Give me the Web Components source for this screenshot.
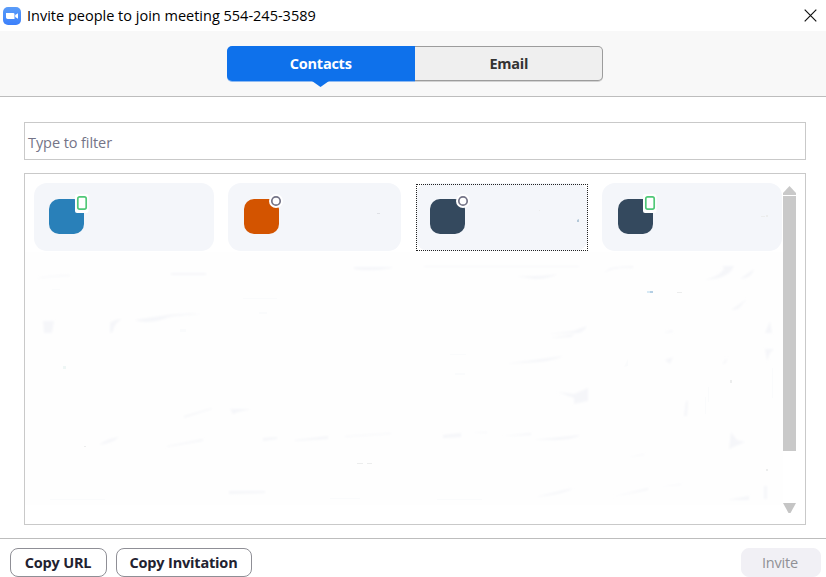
<!DOCTYPE html>
<html lang="en">
<head>
<meta charset="utf-8">
<title>Invite people</title>
<style>
html, body { margin: 0; height: 100%; overflow: hidden; background: #fff; }
body { font-family: "Open Sans", "Noto Sans", sans-serif; font-size: 14.5px; color: #000; }
</style>
</head>
<body>
<invite-window></invite-window>
<script>
const define = (name, html, setup) => {
  const template = document.createElement('template');
  template.innerHTML = html;
  customElements.define(name, class extends HTMLElement {
    constructor() {
      super();
      this.attachShadow({ mode: 'open' }).append(template.content.cloneNode(true));
    }
    connectedCallback() { if (setup) setup(this, this.shadowRoot); }
  });
};

define('title-bar', `
<style>
:host { display: flex; align-items: center; height: 31px; box-sizing: border-box; padding: 0 9px 0 3px; background: #fff; }
.logo { flex: none; margin-right: 6px; }
.text { flex: 1; white-space: nowrap; line-height: 30px; font-size: 14.5px; }
</style>
<svg class="logo" width="18" height="18" viewBox="0 0 18 18">
  <defs><linearGradient id="g" x1="0" y1="0" x2="0" y2="1"><stop offset="0" stop-color="#5a9cf8"/><stop offset="1" stop-color="#3c80fb"/></linearGradient></defs>
  <rect width="18" height="18" rx="5" fill="url(#g)"/>
  <path d="M3 6h7.2q1.3 0 1.3 1.3V12H4.600Q3 12 3 10.600zM12.200 8.100L15 6.200v5.600l-2.800-1.900z" fill="#fff"/>
</svg>
<span class="text"><slot></slot></span>
<svg width="13" height="13" viewBox="0 0 13 13"><path d="M.7.7l11.600 11.600M12.300.7L.7 12.300" stroke="#111" stroke-width="1.200"/></svg>
`);

define('tab-button', `
<style>
:host { display: block; box-sizing: border-box; width: 188.5px; height: 35px; padding-left: 1px; border: 1px solid #9c9c9c; border-left: 0; border-radius: 0 5px 5px 0;
  background: #efefef; box-shadow: 0 1px 0 #d2d2d2; color: #333; font-weight: 700; font-size: 14.5px; letter-spacing: -.25px; line-height: 34px; text-align: center; position: relative; }
:host([selected]) { width: 187.5px; padding-left: 0; border: 0; border-radius: 5px 0 0 5px; background: #0e71eb; box-shadow: 0 1px 0 #8ebaf2; color: #fff; line-height: 36px; }
:host([selected])::after { content: ""; position: absolute; left: 85px; top: 35px; width: 17px; height: 6px; background: #0e71eb; clip-path: polygon(0 0, 100% 0, 50% 100%); }
</style>
<slot></slot>
`);

define('tab-strip', `
<style>
:host { display: flex; justify-content: center; box-sizing: border-box; height: 66px; padding: 15px 0 0 4px; background: #f8f8f8; border-bottom: 1px solid #bdbdbd; }
</style>
<slot></slot>
`);

define('filter-field', `
<style>
:host { display: block; box-sizing: border-box; height: 38px; padding-left: 3px; border: 1px solid #c9c9c9; color: #747487; line-height: 39px; font-size: 14.5px; letter-spacing: -.08px; }
</style>
<slot></slot>
`);

define('contact-card', `
<style>
:host { display: block; box-sizing: border-box; height: 68px; padding: 16px 0 0 var(--inset, 16px); border-radius: 13px; background: #f4f6fa; position: relative; }
:host([focused])::after { content: ""; position: absolute; inset: 1px 0 0 0; border: 1px dotted #222; }
.avatar { position: relative; width: 35px; height: 35px; border-radius: 10px; background: var(--tone); }
svg { position: absolute; left: var(--badge, 24px); top: -6px; overflow: visible; }
.mobile, .offline { display: none; }
:host([status=mobile]) .mobile, :host([status=offline]) .offline { display: block; }
</style>
<div class="avatar">
  <svg class="mobile" width="18" height="22" viewBox="0 0 18 22"><rect x="2" y="1" width="13.500" height="19" rx="2" fill="#fff"/><rect x="4.800" y="3.900" width="8.400" height="12.200" rx="1.800" fill="#fff" stroke="#50c878" stroke-width="1.700"/></svg>
  <svg class="offline" width="18" height="22" viewBox="0 0 18 22"><circle cx="8" cy="8" r="7" fill="#fff"/><circle cx="8" cy="8" r="4.200" fill="#fff" stroke="#747487" stroke-width="1.700"/></svg>
</div>
`, (host) => {
  host.style.setProperty('--tone', host.getAttribute('tone'));
  host.style.setProperty('--inset', host.getAttribute('inset') + 'px');
  host.style.setProperty('--badge', (host.getAttribute('badge') || 24) + 'px');
});

define('scroll-rail', `
<style>
:host { display: flex; flex-direction: column; width: 13px; height: 328px; }
.thumb { height: 255px; margin-top: 1px; background: #c9c9c9; }
svg { display: block; }
.down { margin-top: auto; }
</style>
<svg width="13" height="9"><path d="M6.500 0L13 7v2H0V7z" fill="#c9c9c9"/></svg>
<div class="thumb"></div>
<svg class="down" width="13" height="11"><path d="M0 0h13L7.500 10h-2z" fill="#c5c5c5"/></svg>
`);

define('faded-rows', `
<style>:host { display: block; } svg { display: block; }</style>
<svg width="758" height="320" viewBox="25 185 758 320">
  <defs><filter id="s" x="-5%" y="-5%" width="110%" height="110%"><feGaussianBlur stdDeviation="1"/></filter></defs>
  <rect x="25" y="252" width="758" height="253" fill="#fefefe"/>
  <g fill="#f5f6f9" filter="url(#s)">
    <path d="M34 279q16-4 36-4v1q-18 0-36 3zM171 273h35v2h-35zM354 267h38v1q-22 4-38 1zM43 321h11l-2 12h-8zM110 333v-10q5-4 12-4-8 4-9 13zM134 320l20-3q25-5 50-3-22 1-35 3-19 8-35 3z"/>
    <path d="M99 445q9-7 20-8-6 6-20 8zM167 446l36-7v2l-36 6zM184 416l28-8v1l-28 9zM230 409h21l-13 3-5 2zM263 438l14-1v2l-14 2zM295 440l33-4v3l-33 2zM345 436l46-3v1l-46 3zM229 491h36v2l-36 1z"/>
    <path d="M424 266h155v1H424zM515 276q24 1 43-2-10 5-23 5zM604 273q5-6 14-6l15-1v2q-20-1-29 5zM722 266h12q-5 13-30 14 17-4 20-12zM740 279l14-10q-2 9-14 10zM548 334l25-3 14-5q-4 8-12 7zM505 364l58-8q-7 4-25 6zM549 338l26-4-4 3zM558 392l16 2 14-6v13l-14 3v-6zM443 435l18-2v4l-18 1zM469 433l18-1v1zM502 436l29-3v2zM533 440l47-5q-6 5-30 5z"/>
    <path d="M665 360l8-3-3 7zM722 364l5-6-1 5zM684 416l2-15h2l-1 15zM731 432l6 8 8 2-16 7zM765 333l5-12 2 12zM765 349h9l-4 4-3 8zM624 458l20-4v1zM612 497l36-9v2zM657 487l24-3v1zM535 497l38-9q-7 6-38 9zM727 500l22-4v4zM731 310l16-11-9 10zM663 333l9-3 1 2zM764 486h3v13h-3z"/>
  </g>
  <g fill="#fafbfc"><path d="M50 499h55v1H50zM330 498h30v1h-30zM437 499h45v1h-45zM245 298h20v1h-20zM243 298h34v1h-34zM624 367l4-8v7zM708 387h1v15h-1zM705 397h1v17h-1zM772 368h1v30h-1zM52 289h8v1h-8zM180 329h6v3h-6zM450 354h16v1h-16zM259 312h8v2h-8zM455 373h10v2h-10z"/></g>
  <path d="M63 366h3v3h-3z" fill="#eef6f5"/>
  <g fill="#eceded"><path d="M357 463h6v1h-6zM367 463h5v1h-5zM677 292h5v1h-5zM730 380h2v3h-2zM766 469h2v2h-2zM84 446h2v1h-2zM539 210h1v1h-1zM761 216h4v1h-4zM766 215h2v2h-2z"/></g>
  <path d="M377 213h3v1h-3z" fill="#dfe1e6"/>
  <path d="M647 291h3v2h-3z" fill="#d8eaf5"/><path d="M650 291h3v2h-3z" fill="#b4cfe4"/><path d="M577 220l2-1v3h-2z" fill="#b4c8d8"/>
</svg>
`);

define('contact-list', `
<style>
:host { display: grid; grid-template-columns: 1fr 13px; column-gap: 1px; box-sizing: border-box; height: 352px; padding: 9px 9px 0 9px; border: 1px solid #c9c9c9; position: relative; }
.cards { display: grid; grid-template-columns: 180px 173px 172px 180px; column-gap: 14px; align-content: start; }
::slotted(contact-card:nth-child(3)) { margin-left: 1px; margin-right: -1px; }
::slotted(contact-card:nth-child(4)) { margin-left: 1px; margin-right: -1px; }
scroll-rail { margin-top: 3px; }
faded-rows { position: absolute; left: 0; top: 11px; z-index: 1; pointer-events: none; }
</style>
<div class="cards"><slot></slot></div>
<scroll-rail></scroll-rail>
<faded-rows></faded-rows>
`);

define('push-button', `
<style>
:host { display: block; box-sizing: border-box; height: 29px; padding-right: 1px; border: 1px solid #8f8f96; border-radius: 8px; background: #fff; color: #222230; font-weight: 700; font-size: 14.5px; letter-spacing: -.18px; line-height: 27px; text-align: center; white-space: nowrap; }
:host([disabled]) { padding-right: 2px; border-color: #f1f0f5; background: #f1f0f5; color: #909096; font-weight: 400; }
</style>
<slot></slot>
`);

define('action-bar', `
<style>
:host { display: flex; gap: 9px; box-sizing: border-box; height: 39px; padding: 9px 5px 0 10px; border-top: 1px solid #bdbdbd; }
::slotted([disabled]) { margin-left: auto; }
</style>
<slot></slot>
`);

define('invite-window', `
<style>
:host { display: flex; flex-direction: column; width: 826px; height: 577px; background: #fff; }
.content { flex: 1; display: flex; flex-direction: column; gap: 13px; padding: 25px 20px 0 24px; }
</style>
<title-bar>Invite people to join meeting 554-245-3589</title-bar>
<tab-strip><tab-button selected>Contacts</tab-button><tab-button>Email</tab-button></tab-strip>
<div class="content">
  <filter-field>Type to filter</filter-field>
  <contact-list>
    <contact-card tone="#2980b9" status="mobile" inset="15"></contact-card>
    <contact-card tone="#d35400" status="offline" inset="16"></contact-card>
    <contact-card tone="#34495e" status="offline" inset="14" badge="25" focused></contact-card>
    <contact-card tone="#34495e" status="mobile" inset="16" badge="23"></contact-card>
  </contact-list>
</div>
<action-bar>
  <push-button style="width:97px">Copy URL</push-button>
  <push-button style="width:136px">Copy Invitation</push-button>
  <push-button style="width:80px" disabled>Invite</push-button>
</action-bar>
`);
</script>
</body>
</html>
